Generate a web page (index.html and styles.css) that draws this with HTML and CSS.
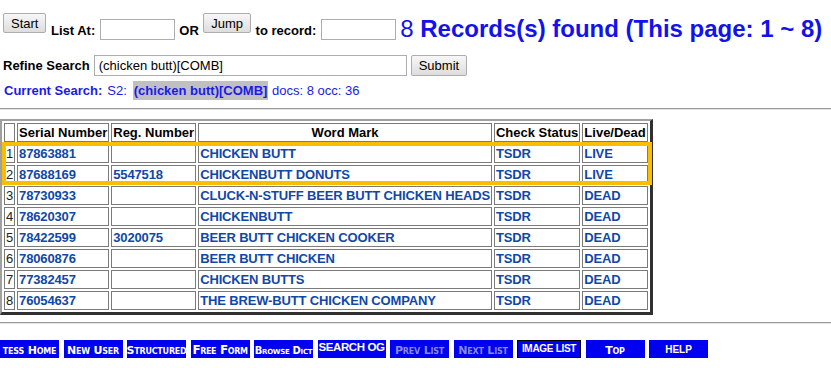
FILE: index.html
```html
<!DOCTYPE html>
<html lang="en">
<head>
    <meta charset="UTF-8">
    <title>TESS -- Records List</title>
    <link rel="stylesheet" href="styles.css">
</head>
<body>
    <form class="jump-bar">
        <button type="button" class="btn">Start</button>
        <span class="lbl">List At:</span>
        <input type="text" class="box">
        <span class="lbl">OR</span>
        <button type="button" class="btn">Jump</button>
        <span class="lbl">to record:</span>
        <input type="text" class="box">
        <span class="found"><span class="count">8</span> Records(s) found (This page: 1 ~ 8)</span>
    </form>

    <form class="refine">
        <span class="lbl">Refine Search</span>
        <input type="text" class="query" value="(chicken butt)[COMB]">
        <button type="button" class="btn submit">Submit</button>
    </form>

    <div class="current">
        <b>Current Search:</b><span class="set">S2:</span><span class="hl">(chicken butt)[COMB]</span> docs: 8 occ: 36
    </div>

    <hr class="rule">

    <div class="results">
        <table class="records">
            <tr>
                <th></th>
                <th>Serial Number</th>
                <th>Reg. Number</th>
                <th>Word Mark</th>
                <th>Check Status</th>
                <th>Live/Dead</th>
            </tr>
            <tr><td class="num">1</td><td>87863881</td><td></td><td>CHICKEN BUTT</td><td>TSDR</td><td>LIVE</td></tr>
            <tr><td class="num">2</td><td>87688169</td><td>5547518</td><td>CHICKENBUTT DONUTS</td><td>TSDR</td><td>LIVE</td></tr>
            <tr><td class="num">3</td><td>78730933</td><td></td><td>CLUCK-N-STUFF BEER BUTT CHICKEN HEADS</td><td>TSDR</td><td>DEAD</td></tr>
            <tr><td class="num">4</td><td>78620307</td><td></td><td>CHICKENBUTT</td><td>TSDR</td><td>DEAD</td></tr>
            <tr><td class="num">5</td><td>78422599</td><td>3020075</td><td>BEER BUTT CHICKEN COOKER</td><td>TSDR</td><td>DEAD</td></tr>
            <tr><td class="num">6</td><td>78060876</td><td></td><td>BEER BUTT CHICKEN</td><td>TSDR</td><td>DEAD</td></tr>
            <tr><td class="num">7</td><td>77382457</td><td></td><td>CHICKEN BUTTS</td><td>TSDR</td><td>DEAD</td></tr>
            <tr><td class="num">8</td><td>76054637</td><td></td><td>THE BREW-BUTT CHICKEN COMPANY</td><td>TSDR</td><td>DEAD</td></tr>
        </table>
        <div class="mark"></div>
    </div>

    <hr class="rule bottom">

    <div class="tabs">
        <a class="tab">tess Home</a>
        <a class="tab">New User</a>
        <a class="tab">Structured</a>
        <a class="tab big">Free Form</a>
        <a class="tab small">Browse Dict</a>
        <a class="tab plain wide">SEARCH OG</a>
        <a class="tab off">Prev List</a>
        <a class="tab off">Next List</a>
        <a class="tab plain boxed">IMAGE LIST</a>
        <a class="tab">Top</a>
        <a class="tab plain">HELP</a>
    </div>
</body>
</html>
```

FILE: styles.css
```css
body {
    margin: 0;
    font-family: "Liberation Sans", Arial, sans-serif;
    font-size: 13px;
    color: #000;
    background: #fff;
}
.jump-bar {
    display: flex;
    align-items: flex-start;
    gap: 4.5px;
    height: 30px;
    margin: 0;
    padding: 13px 0 0 3px;
}
.btn {
    height: 20px;
    padding: 0 7px;
    font-family: "Liberation Sans", Arial, sans-serif;
    font-size: 13px;
    color: #000;
    border: 1px solid #adadad;
    border-radius: 2px;
    background: linear-gradient(#f7f7f7, #dddddd);
}
.lbl {
    margin-top: 10px;
    font-weight: bold;
    line-height: 15px;
    white-space: nowrap;
}
.box {
    width: 75px;
    height: 21px;
    box-sizing: border-box;
    margin: 6px 0 0;
    border: 1px solid #abadb3;
}
.found {
    margin-top: 2px;
    font-size: 24px;
    line-height: 28px;
    font-weight: bold;
    color: #1212ee;
    white-space: nowrap;
}
.count {
    font-weight: normal;
}
.refine {
    display: flex;
    align-items: flex-start;
    gap: 4px;
    margin: 12px 0 0;
    padding-left: 3px;
}
.refine .lbl {
    margin-top: 3px;
}
.query {
    width: 313px;
    height: 21px;
    box-sizing: border-box;
    margin: 0;
    padding: 0 4px;
    font-family: "Liberation Sans", Arial, sans-serif;
    font-size: 13px;
    border: 1px solid #abadb3;
}
.submit {
    height: 21px;
}
.current {
    margin-top: 7px;
    padding-left: 4px;
    line-height: 15px;
    color: #1a1aee;
    white-space: nowrap;
}
.set {
    margin: 0 6px 0 5px;
}
.hl {
    padding: 2px 1px;
    font-weight: bold;
    background: #c0c0c0;
}
.rule {
    height: 0;
    margin: 10px 0 0;
    border: 0;
    border-top: 1px solid #9a9a9a;
    border-bottom: 1px solid #e4e4e4;
}
.rule.bottom {
    margin-top: 4px;
}
.results {
    position: relative;
    display: inline-block;
    margin-top: 9px;
}
.records {
    border-collapse: separate;
    border-spacing: 2px;
    border-style: solid;
    border-width: 2px 3px 3px 2px;
    border-color: #a0a0a0 #303030 #303030 #a0a0a0;
}
.records th,
.records td {
    height: 15px;
    padding: 1px;
    line-height: 15px;
    font-size: 13px;
    font-weight: bold;
    white-space: nowrap;
    border: 1px solid #7a7a7a;
}
.records th {
    color: #000;
}
.records td {
    text-align: left;
    color: #1048a8;
    letter-spacing: -0.15px;
}
.records td.num {
    font-weight: normal;
    color: #222;
}
.mark {
    position: absolute;
    top: 23px;
    left: 2px;
    width: 650px;
    height: 43px;
    box-sizing: border-box;
    border: 4px solid #fbbd00;
}
.tabs {
    display: flex;
    gap: 4.5px;
    margin-top: 16px;
}
.tab {
    display: flex;
    align-items: center;
    justify-content: center;
    width: 59px;
    height: 18px;
    box-sizing: border-box;
    padding-top: 2px;
    font-family: "DejaVu Sans", sans-serif;
    font-size: 11px;
    font-weight: bold;
    font-variant: small-caps;
    letter-spacing: -0.2px;
    color: #fff;
    background: #0000f0;
    white-space: nowrap;
    overflow: hidden;
}
.tab.big {
    font-size: 12px;
    letter-spacing: -0.4px;
}
.tab.small {
    font-size: 10px;
    letter-spacing: -0.3px;
}
.tab.plain {
    padding-top: 0;
    font-family: "Liberation Sans", Arial, sans-serif;
    font-size: 10px;
    font-variant: normal;
    letter-spacing: 0;
}
.tab.wide {
    width: 68px;
    align-items: flex-start;
    padding-top: 1px;
    font-size: 11.5px;
    letter-spacing: -0.4px;
}
.tab.boxed {
    width: 64px;
    align-items: flex-start;
    padding-top: 2px;
    letter-spacing: -0.3px;
    border: 1px solid #000;
}
.tab.off {
    color: #8a8ae6;
}
```
